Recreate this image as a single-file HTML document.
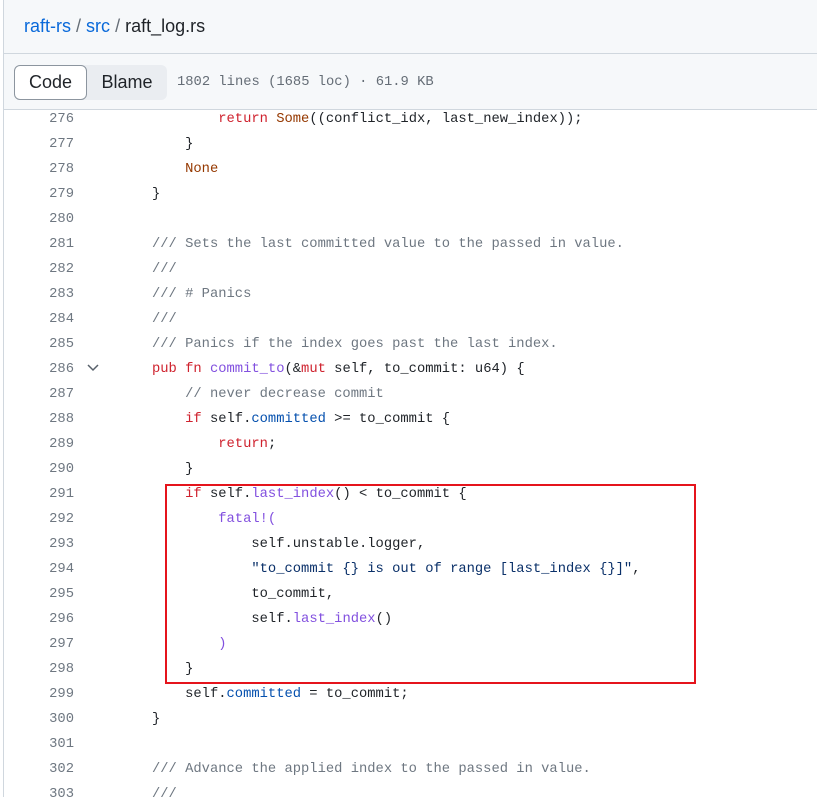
<!DOCTYPE html>
<html><head><meta charset="utf-8"><style>
*{margin:0;padding:0;box-sizing:border-box}
body{width:817px;height:797px;overflow:hidden;background:#fff;font-family:"Liberation Sans",sans-serif;position:relative}
.hdr{position:absolute;left:3px;top:0;width:814px;height:54px;background:#f6f8fa;border-left:1px solid #d0d7de;border-bottom:1px solid #d0d7de}
.crumb{position:absolute;left:24px;top:16px;font-size:18px;color:#1f2328}
.crumb a{color:#0969da;text-decoration:none}
.crumb .s{color:#656d76}
.bar{position:absolute;left:3px;top:54px;width:814px;height:56px;background:#f6f8fa;border-left:1px solid #d0d7de;border-bottom:1px solid #d0d7de}
.seg{position:absolute;left:10px;top:11px;width:153px;height:35px;background:#eaedf1;border-radius:6px}
.code{position:absolute;left:0;top:0;width:73px;height:35px;background:#fff;border:1px solid #8c959f;border-radius:6px;font-size:18px;text-align:center;line-height:33px;color:#1f2328}
.blame{position:absolute;left:73px;top:0;width:80px;height:35px;font-size:18px;text-align:center;line-height:35px;color:#1f2328}
.info{position:absolute;left:173px;top:21px;font-family:"Liberation Mono",monospace;font-size:13.8px;color:#656d76}
.side{position:absolute;left:3px;top:110px;width:1px;height:687px;background:#d0d7de}
.ln{position:absolute;left:0;width:74px;text-align:right;font-family:"Liberation Mono",monospace;font-size:13.8px;color:#6e7781;height:25px;line-height:25px}
.c{position:absolute;left:152px;white-space:pre;font-family:"Liberation Mono",monospace;font-size:13.8px;color:#1f2328;height:25px;line-height:25px}
.k{color:#cf222e}.o{color:#953800}.f{color:#8250df}.b{color:#0550ae}.m{color:#6e7781}.st{color:#0a3069}
.box{position:absolute;left:165px;top:484px;width:531px;height:200px;border:2px solid #e5141c}
</style></head><body>
<div class="hdr"></div>
<div class="crumb"><a>raft-rs</a> <span class="s">/</span> <a>src</a> <span class="s">/</span> raft_log.rs</div>
<div class="bar"><div class="seg"><div class="code">Code</div><div class="blame">Blame</div></div><div class="info">1802 lines (1685 loc) · 61.9 KB</div></div>
<div class="side"></div>
<svg style="position:absolute;left:86px;top:362px" width="14" height="12" viewBox="0 0 14 12"><path d="M2 3 L7 8 L12 3" fill="none" stroke="#57606a" stroke-width="1.5"/></svg>
<div id="L"></div>
<div class="box"></div>
<script>
var lines=[
'        <span class="k">return</span> <span class="o">Some</span>((conflict_idx, last_new_index));',
'    }',
'    <span class="o">None</span>',
'}',
'',
'<span class="m">/// Sets the last committed value to the passed in value.</span>',
'<span class="m">///</span>',
'<span class="m">/// # Panics</span>',
'<span class="m">///</span>',
'<span class="m">/// Panics if the index goes past the last index.</span>',
'<span class="k">pub</span> <span class="k">fn</span> <span class="f">commit_to</span>(&amp;<span class="k">mut</span> self, to_commit: u64) {',
'    <span class="m">// never decrease commit</span>',
'    <span class="k">if</span> self.<span class="b">committed</span> &gt;= to_commit {',
'        <span class="k">return</span>;',
'    }',
'    <span class="k">if</span> self.<span class="f">last_index</span>() &lt; to_commit {',
'        <span class="f">fatal!(</span>',
'            self.unstable.logger,',
'            <span class="st">"to_commit {} is out of range [last_index {}]"</span>,',
'            to_commit,',
'            self.<span class="f">last_index</span>()',
'        <span class="f">)</span>',
'    }',
'    self.<span class="b">committed</span> = to_commit;',
'}',
'',
'<span class="m">/// Advance the applied index to the passed in value.</span>',
'<span class="m">///</span>'];
var h='';
for(var i=0;i<lines.length;i++){var t=106.5+25*i;
h+='<div class="ln" style="top:'+t+'px">'+(276+i)+'</div><div class="c" style="top:'+t+'px">'+lines[i]+'</div>';}
document.getElementById('L').innerHTML=h;
</script>
</body></html>
